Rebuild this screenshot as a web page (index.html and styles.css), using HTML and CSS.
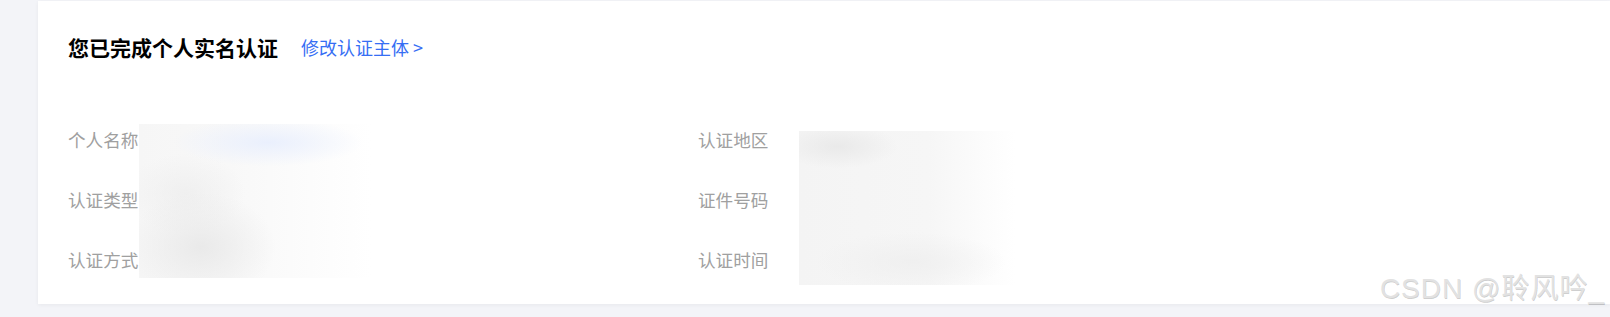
FILE: index.html
```html
<!DOCTYPE html>
<html lang="zh-CN">
<head>
<meta charset="utf-8">
<title>实名认证</title>
<link rel="stylesheet" href="styles.css">
</head>
<body>
<div class="page">
  <section class="card">
    <div class="head">
      <h1 class="title">您已完成个人实名认证</h1>
      <a class="link" href="#">修改认证主体 &gt;</a>
    </div>
    <div class="info">
      <div class="col">
        <div class="row"><span class="label">个人名称</span></div>
        <div class="row"><span class="label">认证类型</span></div>
        <div class="row"><span class="label">认证方式</span></div>
        <div class="mask mask-left"></div>
      </div>
      <div class="col">
        <div class="row"><span class="label">认证地区</span></div>
        <div class="row"><span class="label">证件号码</span></div>
        <div class="row"><span class="label">认证时间</span></div>
        <div class="mask mask-right"></div>
      </div>
    </div>
  </section>
  <div class="watermark">CSDN @聆风吟_</div>
</div>
</body>
</html>
```

FILE: styles.css
```css
* { box-sizing: border-box; }
html, body { margin: 0; padding: 0; }
body {
  background: #f3f4f8;
  font-family: "Noto Sans CJK SC", "Noto Sans", sans-serif;
  width: 1610px;
  height: 317px;
  overflow: hidden;
}
.page {
  position: relative;
  height: 317px;
  padding: 1px 0 0 38px;
}
.card {
  background: #fff;
  height: 303px;
  padding: 30px 0 0 30px;
  box-shadow: 0 1px 4px rgba(0, 0, 0, 0.05);
}
.head {
  display: flex;
  align-items: center;
  height: 32px;
}
.title {
  margin: 0;
  font-size: 21px;
  line-height: 32px;
  font-weight: 700;
  color: #000;
}
.link {
  margin-left: 23px;
  font-size: 18px;
  line-height: 32px;
  color: #366ef4;
  text-decoration: none;
}
.info {
  display: grid;
  grid-template-columns: 630px 1fr;
  margin-top: 47px;
}
.col {
  position: relative;
  display: grid;
  grid-template-rows: repeat(3, 60px);
}
.row {
  display: flex;
  align-items: center;
}
.label {
  font-size: 17.6px;
  line-height: 24px;
  color: #a0a0a0;
}
.mask {
  position: absolute;
}
.mask-left {
  left: 71px;
  top: 14px;
  width: 258px;
  height: 154px;
  background:
    radial-gradient(ellipse 95px 24px at 50% 12%, rgba(233, 239, 253, 0.95), rgba(255, 255, 255, 0) 100%),
    radial-gradient(ellipse 75px 55px at 24% 80%, rgba(232, 232, 232, 0.9), rgba(255, 255, 255, 0) 100%),
    radial-gradient(ellipse 60px 40px at 18% 45%, rgba(236, 236, 236, 0.7), rgba(255, 255, 255, 0) 100%),
    linear-gradient(to right, #f6f6f6 0%, #f8f8f8 35%, rgba(255, 255, 255, 0) 90%),
    #fff;
}
.mask-right {
  left: 101px;
  top: 21px;
  width: 216px;
  height: 154px;
  background:
    radial-gradient(ellipse 60px 22px at 18% 10%, rgba(232, 232, 232, 0.9), rgba(255, 255, 255, 0) 100%),
    radial-gradient(ellipse 95px 30px at 52% 85%, rgba(238, 238, 238, 0.8), rgba(255, 255, 255, 0) 100%),
    linear-gradient(to right, #f4f4f4 0%, #f6f6f6 60%, rgba(255, 255, 255, 0) 100%),
    #fff;
}
.watermark {
  position: absolute;
  right: 5px;
  bottom: 12px;
  font-family: "Liberation Sans", "Noto Sans CJK SC", sans-serif;
  font-size: 28px;
  line-height: 32px;
  letter-spacing: 1px;
  color: #e2e2e2;
  text-shadow: 0.5px 0.5px 0.5px rgba(0, 0, 0, 0.2);
  white-space: nowrap;
}
```
